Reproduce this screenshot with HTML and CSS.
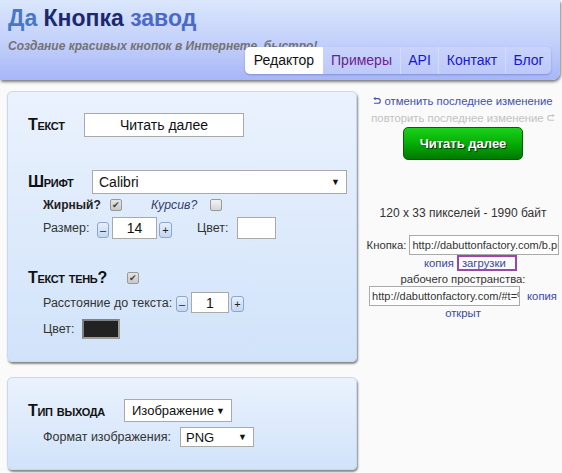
FILE: index.html
```html
<!DOCTYPE html>
<html lang="ru">
<head>
<meta charset="utf-8">
<title>Да Кнопка завод</title>
<link rel="stylesheet" href="styles.css">
</head>
<body>
<header class="masthead">
  <h1 class="logo"><span class="logo-da">Да</span> <span class="logo-knopka">Кнопка</span> <span class="logo-zavod">завод</span></h1>
  <p class="tagline">Создание красивых кнопок в Интернете, быстро!</p>
  <nav class="tabs">
    <a class="tab tab-active w-editor">Редактор</a>
    <a class="tab tab-visited w-examples">Примеры</a>
    <a class="tab w-api">API</a>
    <a class="tab w-contact">Контакт</a>
    <a class="tab w-blog">Блог</a>
  </nav>
</header>

<main class="layout">
  <section class="left">
    <div class="panel panel-main">
      <div class="row row-text">
        <span class="biglabel w-lbl-text">Текст</span>
        <span class="field field-text">Читать далее</span>
      </div>
      <div class="row row-font">
        <span class="biglabel w-lbl-font">Шрифт</span>
        <span class="select select-font"><span>Calibri</span><span class="arrow">▼</span></span>
      </div>
      <div class="row sub row-bold">
        <span class="lbl-bold w-bold">Жирный?</span>
        <span class="check checked">✔</span>
        <span class="lbl-italic w-italic">Курсив?</span>
        <span class="check"></span>
      </div>
      <div class="row sub row-size">
        <span class="lbl w-size">Размер:</span>
        <span class="step">–</span>
        <span class="field field-num w-num-size">14</span>
        <span class="step step-plus">+</span>
        <span class="lbl w-color">Цвет:</span>
        <span class="swatch swatch-white"></span>
      </div>
      <div class="row row-shadow">
        <span class="biglabel w-lbl-shadow">Текст тень?</span>
        <span class="check checked">✔</span>
      </div>
      <div class="row sub row-dist">
        <span class="lbl w-dist">Расстояние до текста:</span>
        <span class="step">–</span>
        <span class="field field-num w-num-dist">1</span>
        <span class="step step-plus">+</span>
      </div>
      <div class="row sub row-scolor">
        <span class="lbl w-scolor">Цвет:</span>
        <span class="swatch swatch-dark"></span>
      </div>
    </div>

    <div class="panel panel-out">
      <div class="row row-type">
        <span class="biglabel w-lbl-type">Тип выхода</span>
        <span class="select select-type"><span>Изображение</span><span class="arrow">▼</span></span>
      </div>
      <div class="row sub row-format">
        <span class="lbl w-format">Формат изображения:</span>
        <span class="select select-format"><span>PNG</span><span class="arrow">▼</span></span>
      </div>
    </div>
  </section>

  <aside class="right">
    <div class="undo"><svg class="ico" width="8" height="8" viewBox="0 0 8 8"><path d="M2.2 1.6 H5 A2.3 2.3 0 0 1 5 6.2 H1" fill="none" stroke="#4050b0" stroke-width="1.1"/><path d="M0.2 1.6 L2.6 0 L2.6 3.2 Z" fill="#4050b0"/></svg> отменить последнее изменение</div>
    <div class="redo">повторить последнее изменение <svg class="ico" width="8" height="8" viewBox="0 0 8 8"><path d="M5.8 1.6 H3 A2.3 2.3 0 0 0 3 6.2 H7" fill="none" stroke="#c4c4c4" stroke-width="1.1"/><path d="M7.8 1.6 L5.4 0 L5.4 3.2 Z" fill="#c4c4c4"/></svg></div>
    <div class="preview"><span class="gbutton">Читать далее</span></div>
    <div class="dims">120 x 33 пикселей - 1990 байт</div>
    <div class="url-row">
      <span class="url-label">Кнопка:</span>
      <span class="url url-btn">http://dabuttonfactory.com/b.png</span>
    </div>
    <div class="links-row">
      <a class="link">копия</a>
      <a class="link boxed">загрузки</a>
    </div>
    <div class="ws-label">рабочего пространства:</div>
    <div class="url-row url-row2">
      <span class="url url-ws">http://dabuttonfactory.com/#t=%</span>
      <a class="link">копия</a>
    </div>
    <div class="open-row"><a class="link">открыт</a></div>
  </aside>
</main>
</body>
</html>
```

FILE: styles.css
```css
* { box-sizing: border-box; }

html, body {
  margin: 0;
  padding: 0;
}

body {
  background: #fafafa;
  font-family: "Liberation Sans", Arial, sans-serif;
  color: #222;
  width: 562px;
  height: 473px;
  overflow: hidden;
}

/* ---------- header ---------- */
.masthead {
  width: 560px;
  height: 80px;
  padding: 6px 9px 0 8px;
  background: linear-gradient(#dae7fc, #c2cffa 55%, #a7b6f8);
  border-bottom-right-radius: 8px;
  box-shadow: 1px 2px 3px rgba(0, 0, 0, 0.5);
  display: flex;
  flex-direction: column;
}

.logo {
  margin: 0;
  font-size: 23px;
  line-height: 25px;
  font-weight: bold;
}
.logo-da { color: #4677c9; }
.logo-knopka { color: #1c2870; }
.logo-zavod { color: #4a69c8; }

.tagline {
  margin: 8px 0 0 0;
  font-size: 12px;
  line-height: 14px;
  font-style: italic;
  font-weight: bold;
  color: #737373;
}

.tabs {
  align-self: flex-end;
  margin-top: -6px;
  display: flex;
  height: 27px;
  border-radius: 5px;
  overflow: hidden;
  box-shadow: 0 1px 2px rgba(40, 50, 120, 0.3);
}

.tab {
  display: block;
  height: 27px;
  line-height: 27px;
  font-size: 14px;
  text-align: center;
  color: #1717d0;
  background: linear-gradient(#c9d3fb, #bdc9fa);
  border-left: 1px solid #d3dcfc;
}
.tab-active {
  background: #ffffff;
  color: #111;
  border-left: none;
}
.tab-visited { color: #6a2290; border-left: none; }
.w-editor { width: 78px; }
.w-examples { width: 77px; }
.w-api { width: 38px; }
.w-contact { width: 67px; }
.w-blog { width: 46px; }

/* ---------- layout ---------- */
.layout {
  display: flex;
  align-items: flex-start;
  margin-top: 11px;
}

.left {
  margin-left: 7px;
  width: 350px;
}

.panel {
  width: 350px;
  border: 1px solid #c3d9f5;
  border-radius: 5px;
  background: linear-gradient(#eaf2fd, #d1e3fa);
  box-shadow: 1px 2px 2px rgba(0, 0, 0, 0.45);
  padding: 21px 0 0 20px;
}
.panel-main { height: 271px; }
.panel-out { height: 93px; margin-top: 15px; }

.row {
  display: flex;
  align-items: center;
}
.sub { padding-left: 15px; }

.row-text { height: 24px; }
.row-font { height: 24px; margin-top: 33px; }
.row-bold { height: 12px; margin-top: 5px; }
.row-size { height: 22px; margin-top: 6px; }
.row-shadow { height: 20px; margin-top: 29px; }
.row-dist { height: 21px; margin-top: 4px; }
.row-scolor { height: 20px; margin-top: 6px; }
.row-type { height: 23px; }
.row-format { height: 20px; margin-top: 5px; }

.biglabel {
  font-size: 16px;
  font-weight: bold;
  font-variant: small-caps;
  color: #111;
  white-space: nowrap;
  letter-spacing: -0.3px;
}
.w-lbl-text { width: 56px; }
.w-lbl-font { width: 64px; }
.w-lbl-shadow { width: 99px; }
.w-lbl-type { width: 96px; }

.lbl {
  font-size: 12.5px;
  color: #333;
  white-space: nowrap;
}
.lbl-bold {
  font-size: 12px;
  font-weight: bold;
  color: #222;
}
.lbl-italic {
  font-size: 12.3px;
  font-style: italic;
  color: #34416a;
  margin-left: 29px;
}
.w-bold { width: 67px; }
.w-italic { width: 59px; }
.w-size { width: 54px; }
.w-color { width: 40px; margin-left: 25px; }
.w-dist { width: 133px; }
.w-scolor { width: 39px; }
.w-format { width: 137px; }

.field {
  display: flex;
  align-items: center;
  justify-content: center;
  background: #fff;
  border: 1px solid #a9a9a9;
  font-size: 14px;
  color: #111;
  height: 100%;
}
.field-text { width: 160px; }
.w-num-size { width: 45px; margin-left: 3px; }
.w-num-dist { width: 38px; margin-left: 3px; height: 21px; }

.select {
  display: flex;
  align-items: center;
  justify-content: space-between;
  background: #fff;
  border: 1px solid #a9a9a9;
  font-size: 13px;
  color: #111;
  height: 100%;
  padding: 0 6px 0 6px;
}
.arrow { font-size: 9px; color: #111; }
.select-font { width: 255px; font-size: 14px; }
.select-type { width: 108px; padding-left: 7px; }
.select-format { width: 74px; padding-left: 5px; }

.step {
  width: 12px;
  height: 16px;
  border: 1px solid #8ea6c9;
  border-radius: 3px;
  background: linear-gradient(#e6effc, #c3d7f3);
  font-size: 11px;
  line-height: 14px;
  text-align: center;
  color: #222;
  align-self: flex-end;
  margin-bottom: 1px;
}
.step-plus { margin-left: 2px; width: 13px; }

.check {
  width: 12px;
  height: 12px;
  border: 1px solid #9a9a9a;
  border-radius: 2px;
  background: linear-gradient(#f2f2f2, #d6d6d6);
  font-size: 9px;
  line-height: 10px;
  text-align: center;
  color: #444;
}
.checked { background: linear-gradient(#e4e4e4, #c8c8c8); }

.swatch { height: 100%; }
.swatch-white {
  width: 39px;
  background: #fff;
  border: 1px solid #a9a9a9;
}
.swatch-dark {
  width: 38px;
  background: #222;
  border: 2px solid #9c9c9c;
  border-top-color: #808080;
  border-left-color: #808080;
}

/* ---------- right column ---------- */
.right {
  margin-left: 8px;
  width: 196px;
  padding-top: 2px;
  text-align: center;
  font-size: 11.3px;
  color: #333;
}

.undo, .redo {
  line-height: 17px;
  white-space: nowrap;
}
.undo { color: #4050b0; }
.redo { color: #c2c2c2; }

.preview {
  height: 33px;
  display: flex;
  justify-content: center;
}
.gbutton {
  width: 120px;
  height: 33px;
  border: 1px solid #0a5a0a;
  border-radius: 5px;
  background: linear-gradient(#19d219, #05a805 55%, #027802);
  color: #fff;
  font-size: 13px;
  font-weight: bold;
  line-height: 31px;
  text-shadow: 1px 1px 1px #0b2a0b;
}

.dims {
  margin-top: 45px;
  line-height: 16px;
  font-size: 12px;
  white-space: nowrap;
}

.url-row {
  display: flex;
  align-items: center;
  justify-content: center;
  margin-top: 14px;
}
.url-label { margin-right: 3px; }
.url {
  height: 20px;
  border: 1px solid #aaa;
  background: #fff;
  font-size: 11px;
  line-height: 18px;
  color: #333;
  padding-left: 2px;
  overflow: hidden;
  white-space: nowrap;
  text-align: left;
}
.url-btn { width: 150px; }
.url-ws { width: 151px; }
.url-row2 { margin-top: 0; }
.url-row2 .link { margin-left: 7px; }

.link { color: #3a48a8; }

.links-row {
  display: flex;
  align-items: center;
  height: 16px;
  padding-left: 59px;
}
.boxed {
  margin-left: 3px;
  border: 2px solid #9a48a8;
  padding: 0 9px 0 3px;
  line-height: 12px;
}

.ws-label {
  line-height: 14px;
  margin-top: 1px;
}

.open-row {
  line-height: 14px;
}
```
